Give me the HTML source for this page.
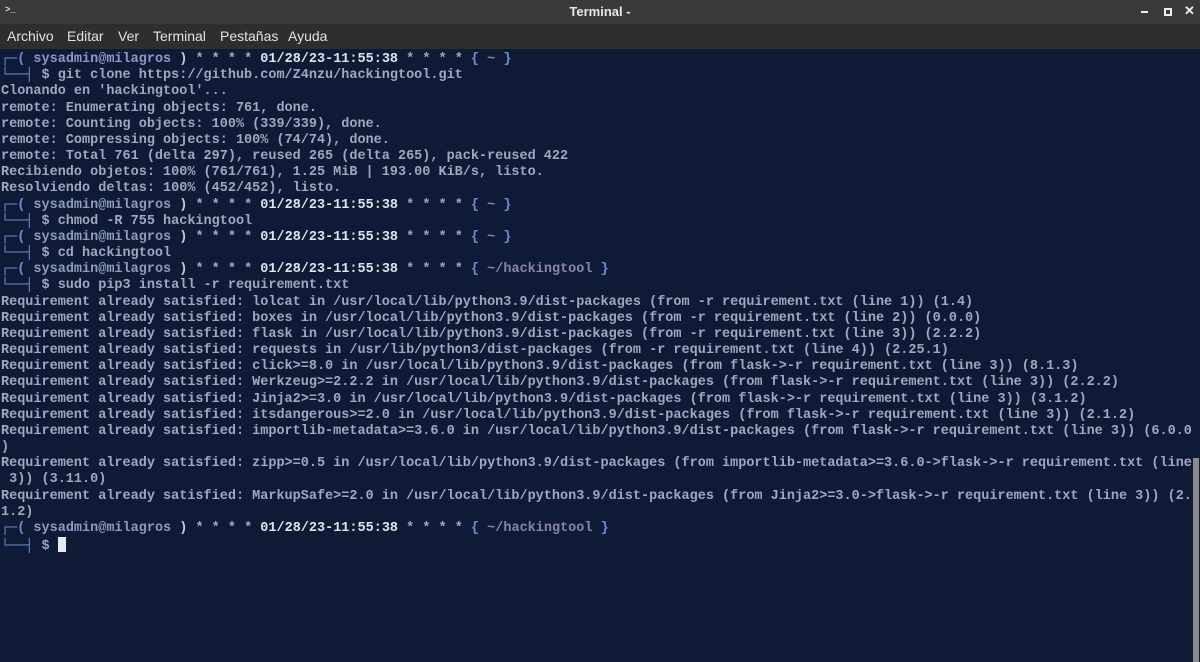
<!DOCTYPE html>
<html><head><meta charset="utf-8"><style>
html,body{margin:0;padding:0;width:1200px;height:662px;overflow:hidden;background:#0f1b36;}
.title{position:absolute;left:0;top:0;width:1200px;height:24px;background:#3a3a3a;color:#e8e8e8;font:bold 13px "Liberation Sans",sans-serif;text-align:center;line-height:24px;}
.menu{position:absolute;left:0;top:24px;width:1200px;height:25px;background:#2c2e30;color:#e2e2e2;font:14px "Liberation Sans",sans-serif;line-height:25px;}
.menu span{position:absolute;top:0}
.term{position:absolute;left:1px;top:52px;width:1192px;height:610px;background:#0f1b36;}
pre{margin:0;font:bold 13.5px/16.17px "Liberation Mono",monospace;color:#9ea8bf;}
.b{color:#6d8fd6}.u{color:#8e9ac0}.d{color:#dfe3ec}.p{color:#8a85a8}.w{color:#c8ccd6}
.sb{position:absolute;left:1193px;top:458px;width:6px;height:204px;background:#8a8a8a;}
.cur{display:inline-block;width:8px;height:15px;background:#e6e9ef;vertical-align:-3px}
</style></head><body>
<div class="title">Terminal -</div>
<div style="position:absolute;left:5px;top:5px;color:#ddd;font:bold 9px 'Liberation Mono',monospace">&gt;_</div>
<div style="position:absolute;left:1141px;top:11px;width:7px;height:2px;background:#eee"></div>
<div style="position:absolute;left:1164px;top:8px;width:4px;height:4px;border:2px solid #eee"></div>
<div style="position:absolute;left:1184px;top:3px;color:#eee;font:bold 13px 'Liberation Sans',sans-serif">✕</div>
<div class="menu"><span style="left:7px">Archivo</span><span style="left:67px">Editar</span><span style="left:118px">Ver</span><span style="left:153px">Terminal</span><span style="left:220px">Pestañas</span><span style="left:288px">Ayuda</span></div>
<div class="term"><pre><span class="b">┌─(</span> <span class="u">sysadmin@milagros</span> <span class="w">)</span> * * * * <span class="d">01/28/23-11:55:38</span> * * * * <span class="b">{</span> <span class="p">~</span> <span class="b">}</span>
<span class="b">└──┤</span> $ git clone https://github.com/Z4nzu/hackingtool.git
Clonando en 'hackingtool'...
remote: Enumerating objects: 761, done.
remote: Counting objects: 100% (339/339), done.
remote: Compressing objects: 100% (74/74), done.
remote: Total 761 (delta 297), reused 265 (delta 265), pack-reused 422
Recibiendo objetos: 100% (761/761), 1.25 MiB | 193.00 KiB/s, listo.
Resolviendo deltas: 100% (452/452), listo.
<span class="b">┌─(</span> <span class="u">sysadmin@milagros</span> <span class="w">)</span> * * * * <span class="d">01/28/23-11:55:38</span> * * * * <span class="b">{</span> <span class="p">~</span> <span class="b">}</span>
<span class="b">└──┤</span> $ chmod -R 755 hackingtool
<span class="b">┌─(</span> <span class="u">sysadmin@milagros</span> <span class="w">)</span> * * * * <span class="d">01/28/23-11:55:38</span> * * * * <span class="b">{</span> <span class="p">~</span> <span class="b">}</span>
<span class="b">└──┤</span> $ cd hackingtool
<span class="b">┌─(</span> <span class="u">sysadmin@milagros</span> <span class="w">)</span> * * * * <span class="d">01/28/23-11:55:38</span> * * * * <span class="b">{</span> <span class="p">~/hackingtool</span> <span class="b">}</span>
<span class="b">└──┤</span> $ sudo pip3 install -r requirement.txt
Requirement already satisfied: lolcat in /usr/local/lib/python3.9/dist-packages (from -r requirement.txt (line 1)) (1.4)
Requirement already satisfied: boxes in /usr/local/lib/python3.9/dist-packages (from -r requirement.txt (line 2)) (0.0.0)
Requirement already satisfied: flask in /usr/local/lib/python3.9/dist-packages (from -r requirement.txt (line 3)) (2.2.2)
Requirement already satisfied: requests in /usr/lib/python3/dist-packages (from -r requirement.txt (line 4)) (2.25.1)
Requirement already satisfied: click>=8.0 in /usr/local/lib/python3.9/dist-packages (from flask->-r requirement.txt (line 3)) (8.1.3)
Requirement already satisfied: Werkzeug>=2.2.2 in /usr/local/lib/python3.9/dist-packages (from flask->-r requirement.txt (line 3)) (2.2.2)
Requirement already satisfied: Jinja2>=3.0 in /usr/local/lib/python3.9/dist-packages (from flask->-r requirement.txt (line 3)) (3.1.2)
Requirement already satisfied: itsdangerous>=2.0 in /usr/local/lib/python3.9/dist-packages (from flask->-r requirement.txt (line 3)) (2.1.2)
Requirement already satisfied: importlib-metadata>=3.6.0 in /usr/local/lib/python3.9/dist-packages (from flask->-r requirement.txt (line 3)) (6.0.0
)
Requirement already satisfied: zipp>=0.5 in /usr/local/lib/python3.9/dist-packages (from importlib-metadata>=3.6.0->flask->-r requirement.txt (line
 3)) (3.11.0)
Requirement already satisfied: MarkupSafe>=2.0 in /usr/local/lib/python3.9/dist-packages (from Jinja2>=3.0->flask->-r requirement.txt (line 3)) (2.
1.2)
<span class="b">┌─(</span> <span class="u">sysadmin@milagros</span> <span class="w">)</span> * * * * <span class="d">01/28/23-11:55:38</span> * * * * <span class="b">{</span> <span class="p">~/hackingtool</span> <span class="b">}</span>
<span class="b">└──┤</span> $ <span class="cur"></span></pre></div>
<div class="sb"></div>
</body></html>
